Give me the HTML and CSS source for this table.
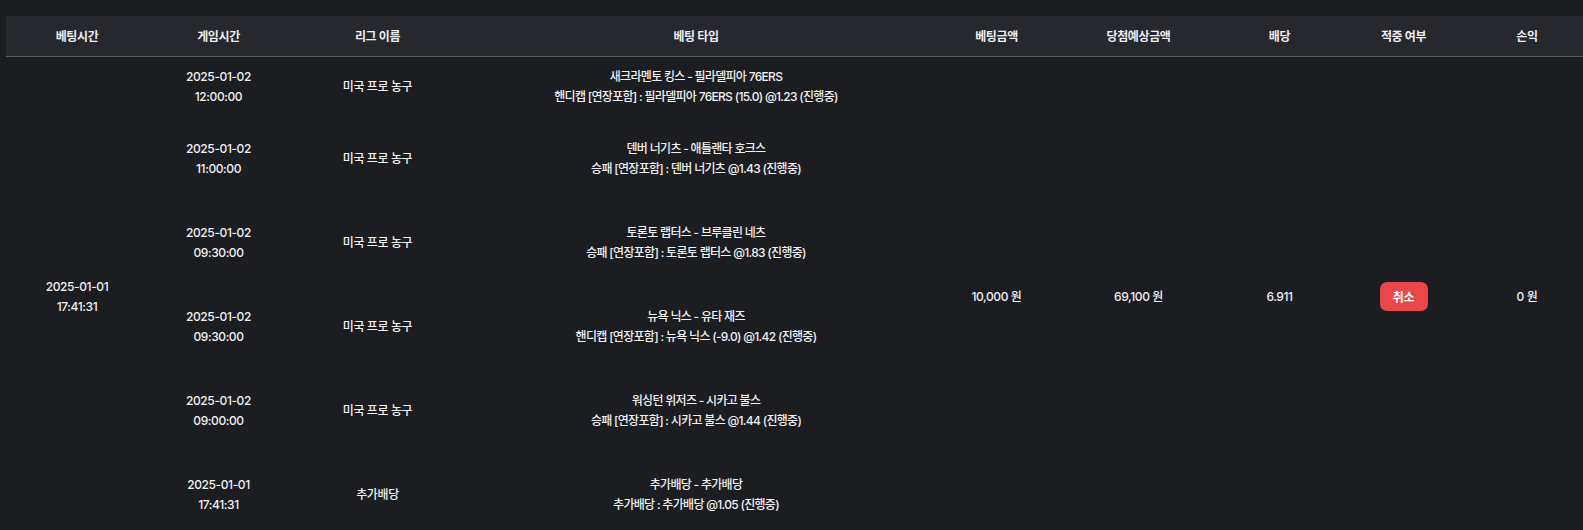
FILE: index.html
```html
<!DOCTYPE html>
<html lang="ko">
<head>
<meta charset="utf-8">
<title>베팅 내역</title>
<link rel="stylesheet" href="styles.css">
</head>
<body>
<div class="wrap">
<table class="bets">
  <colgroup>
    <col class="w-bettime">
    <col class="w-gametime">
    <col class="w-league">
    <col class="w-type">
    <col class="w-amount">
    <col class="w-expect">
    <col class="w-odds">
    <col class="w-result">
    <col class="w-profit">
  </colgroup>
  <thead>
    <tr>
      <th>베팅시간</th>
      <th>게임시간</th>
      <th>리그 이름</th>
      <th>베팅 타입</th>
      <th>베팅금액</th>
      <th>당첨예상금액</th>
      <th>배당</th>
      <th>적중 여부</th>
      <th>손익</th>
    </tr>
  </thead>
  <tbody>
    <tr class="row-first">
      <td rowspan="6">2025-01-01<br>17:41:31</td>
      <td>2025-01-02<br>12:00:00</td>
      <td class="league">미국 프로 농구</td>
      <td class="type">새크라멘토 킹스 - 필라델피아 76ERS<br>핸디캡 [연장포함] : 필라델피아 76ERS (15.0) @1.23 (진행중)</td>
      <td rowspan="6">10,000 원</td>
      <td rowspan="6">69,100 원</td>
      <td rowspan="6">6.911</td>
      <td rowspan="6"><button class="btn-cancel" type="button">취소</button></td>
      <td rowspan="6">0 원</td>
    </tr>
    <tr class="row">
      <td>2025-01-02<br>11:00:00</td>
      <td class="league">미국 프로 농구</td>
      <td class="type">덴버 너기츠 - 애틀랜타 호크스<br>승패 [연장포함] : 덴버 너기츠 @1.43 (진행중)</td>
    </tr>
    <tr class="row">
      <td>2025-01-02<br>09:30:00</td>
      <td class="league">미국 프로 농구</td>
      <td class="type">토론토 랩터스 - 브루클린 네츠<br>승패 [연장포함] : 토론토 랩터스 @1.83 (진행중)</td>
    </tr>
    <tr class="row">
      <td>2025-01-02<br>09:30:00</td>
      <td class="league">미국 프로 농구</td>
      <td class="type">뉴욕 닉스 - 유타 재즈<br>핸디캡 [연장포함] : 뉴욕 닉스 (-9.0) @1.42 (진행중)</td>
    </tr>
    <tr class="row">
      <td>2025-01-02<br>09:00:00</td>
      <td class="league">미국 프로 농구</td>
      <td class="type">워싱턴 위저즈 - 시카고 불스<br>승패 [연장포함] : 시카고 불스 @1.44 (진행중)</td>
    </tr>
    <tr class="row">
      <td>2025-01-01<br>17:41:31</td>
      <td class="league">추가배당</td>
      <td class="type">추가배당 - 추가배당<br>추가배당 : 추가배당 @1.05 (진행중)</td>
    </tr>
  </tbody>
</table>
</div>
</body>
</html>
```
FILE: styles.css
```css
html, body {
  margin: 0;
  padding: 0;
  background: #1c1d21;
  overflow: hidden;
  height: 530px;
}

body {
  font-family: "Inter", "Noto Sans CJK KR", sans-serif;
  color: #f1f1f3;
  font-size: 12px;
  font-weight: 500;
  letter-spacing: -0.4px;
}

.wrap {
  padding: 16px 0 0 6px;
}

.bets {
  table-layout: fixed;
  width: 1590px;
  border-collapse: collapse;
  border-spacing: 0;
}

.w-bettime { width: 142px; }
.w-gametime { width: 141px; }
.w-league { width: 177px; }
.w-type { width: 460px; }
.w-amount { width: 141px; }
.w-expect { width: 143px; }
.w-odds { width: 139px; }
.w-result { width: 109px; }
.w-profit { width: 138px; }

.bets thead tr {
  background: #27282d;
  height: 40px;
}

.bets th {
  padding: 0;
  font-weight: 600;
  font-size: 12px;
  text-align: center;
  vertical-align: middle;
  border-bottom: 1px solid #5c5d62;
  color: #eceef2;
}

.bets td {
  padding: 0;
  text-align: center;
  vertical-align: middle;
  line-height: 20px;
}

.bets td.type {
  letter-spacing: -0.7px;
}

.row-first { height: 61px; }
.row { height: 84px; }

.btn-cancel {
  width: 48px;
  height: 29px;
  border: 0;
  border-radius: 7px;
  background: #e84848;
  color: #ffffff;
  font-family: "Inter", "Noto Sans CJK KR", sans-serif;
  font-size: 12px;
  font-weight: 600;
  letter-spacing: -0.4px;
  padding: 0;
  cursor: pointer;
}
```
